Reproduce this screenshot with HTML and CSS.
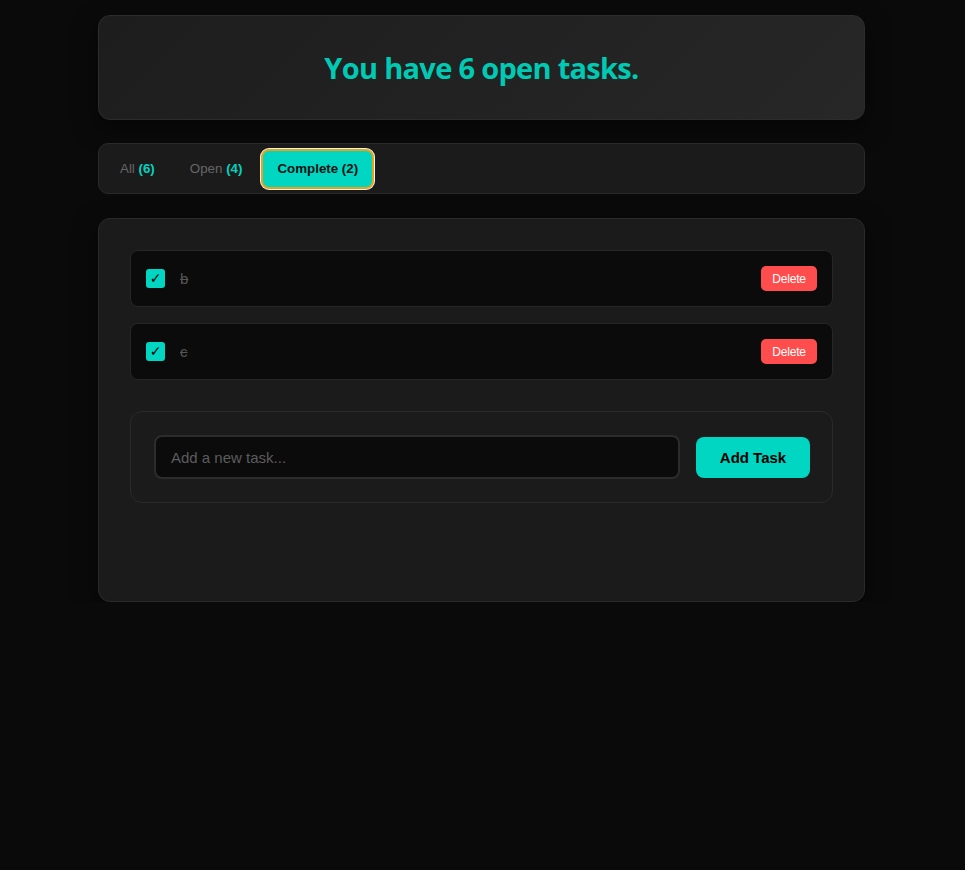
FILE: index.html
```html
<!DOCTYPE html>
<html lang="en">
<head>
<meta charset="utf-8">
<title>Tasks</title>
<link rel="stylesheet" href="styles.css">
</head>
<body>
<div class="app">
  <header class="hero">
    <h1 class="hero-title">You have 6 open tasks.</h1>
  </header>
  <nav class="filters">
    <button class="filter">All <span class="count">(6)</span></button>
    <button class="filter">Open <span class="count">(4)</span></button>
    <button class="filter active">Complete <span class="count">(2)</span></button>
  </nav>
  <main class="panel">
    <ul class="tasks">
      <li class="task">
        <span class="check">&#10003;</span>
        <span class="task-text">b</span>
        <button class="delete">Delete</button>
      </li>
      <li class="task">
        <span class="check">&#10003;</span>
        <span class="task-text">c</span>
        <button class="delete">Delete</button>
      </li>
    </ul>
    <form class="add-form">
      <input class="add-input" type="text" placeholder="Add a new task...">
      <button class="add-btn" type="button">Add Task</button>
    </form>
  </main>
</div>
</body>
</html>
```
FILE: styles.css
```css
* { box-sizing: border-box; }
html, body { margin: 0; padding: 0; }
body {
  background: #0a0a0a;
  font-family: "Liberation Sans", Arial, sans-serif;
  color: #ddd;
}
.app {
  width: 767px;
  margin: 0 auto;
  padding-top: 15px;
  position: relative;
  left: -1px;
}
.hero {
  height: 105px;
  border: 1px solid #2c2c2c;
  border-radius: 12px;
  background: linear-gradient(135deg, #1d1d1d, #272727);
  display: flex;
  align-items: center;
  justify-content: center;
  box-shadow: 0 8px 24px rgba(0,0,0,0.5);
}
.hero-title {
  margin: 0;
  font-family: "Open Sans", sans-serif;
  font-weight: 700;
  font-size: 29px;
  letter-spacing: -0.7px;
  color: #00c9b4;
}
.filters {
  margin-top: 23px;
  height: 51px;
  border: 1px solid #2a2a2a;
  border-radius: 10px;
  background: #1b1b1b;
  display: flex;
  align-items: center;
  padding: 0 5px;
  gap: 3px;
}
.filter {
  font-family: "Liberation Sans", Arial, sans-serif;
  font-size: 13.33px;
  color: #666;
  background: transparent;
  border: 2px solid transparent;
  border-radius: 8px;
  height: 40px;
  padding: 0 14px;
  cursor: pointer;
}
.filter .count { color: #00d4c0; font-weight: 700; }
.filter.active {
  background: #00d6c2;
  color: #111;
  font-weight: 700;
  border: 2px solid #e8a317;
  box-shadow: 0 0 0 1px #f3f3f3;
}
.filter.active .count { color: #111; }
.panel {
  margin-top: 24px;
  border: 1px solid #2a2a2a;
  border-radius: 12px;
  background: #1b1b1b;
  padding: 31px 31px 98px;
  box-shadow: 0 8px 24px rgba(0,0,0,0.5);
}
.tasks {
  list-style: none;
  margin: 0;
  padding: 0;
  display: flex;
  flex-direction: column;
  gap: 16px;
}
.task {
  height: 57px;
  background: #0b0b0b;
  border: 1px solid #262626;
  border-radius: 8px;
  display: flex;
  align-items: center;
  padding: 0 15px;
}
.check {
  width: 19px;
  height: 19px;
  border-radius: 3px;
  background: #00d6c2;
  color: #000;
  font-size: 14px;
  line-height: 19px;
  text-align: center;
  font-family: "DejaVu Sans", sans-serif;
}
.task-text {
  margin-left: 15px;
  flex: 1;
  color: #555;
  font-size: 15px;
  text-decoration: line-through;
}
.delete {
  background: #ff4d4d;
  color: #fff;
  border: none;
  border-radius: 5px;
  width: 56px;
  height: 25px;
  font-family: "Liberation Sans", Arial, sans-serif;
  font-size: 12px;
  letter-spacing: -0.2px;
  cursor: pointer;
}
.add-form {
  margin-top: 31px;
  border: 1px solid #2a2a2a;
  border-radius: 12px;
  padding: 23px 22px 23px 23px;
  display: flex;
  align-items: center;
  gap: 16px;
}
.add-input {
  flex: 1;
  height: 44px;
  background: #0b0b0b;
  border: 2px solid #2c2c2c;
  border-radius: 8px;
  padding: 0 15px;
  font-family: "Liberation Sans", Arial, sans-serif;
  font-size: 15px;
  color: #ddd;
  outline: none;
}
.add-input::placeholder { color: #5c5c5c; }
.add-btn {
  width: 114px;
  height: 41px;
  background: #00d6c2;
  color: #000;
  border: none;
  border-radius: 8px;
  font-family: "Liberation Sans", Arial, sans-serif;
  font-weight: 700;
  font-size: 15px;
  cursor: pointer;
}
```
